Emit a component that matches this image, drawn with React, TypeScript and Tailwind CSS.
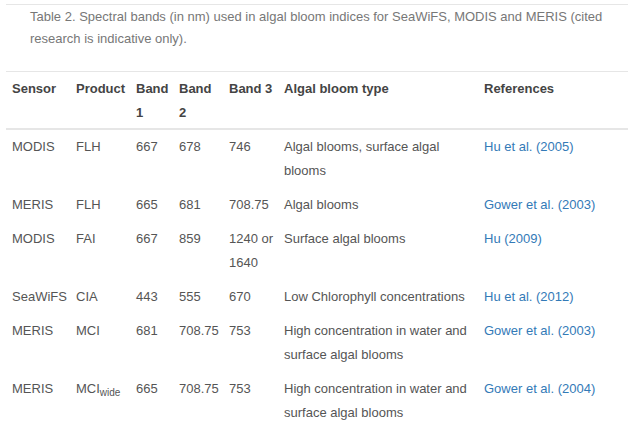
import React from "react";

type Row = {
  sensor: string;
  product: React.ReactNode;
  b1: string;
  b2: string;
  b3: string;
  type: string;
  ref: string;
};

const rows: Row[] = [
  { sensor: "MODIS", product: "FLH", b1: "667", b2: "678", b3: "746", type: "Algal blooms, surface algal blooms", ref: "Hu et al. (2005)" },
  { sensor: "MERIS", product: "FLH", b1: "665", b2: "681", b3: "708.75", type: "Algal blooms", ref: "Gower et al. (2003)" },
  { sensor: "MODIS", product: "FAI", b1: "667", b2: "859", b3: "1240 or 1640", type: "Surface algal blooms", ref: "Hu (2009)" },
  { sensor: "SeaWiFS", product: "CIA", b1: "443", b2: "555", b3: "670", type: "Low Chlorophyll concentrations", ref: "Hu et al. (2012)" },
  { sensor: "MERIS", product: "MCI", b1: "681", b2: "708.75", b3: "753", type: "High concentration in water and surface algal blooms", ref: "Gower et al. (2003)" },
  {
    sensor: "MERIS",
    product: (
      <>
        MCI<sub className="text-[10px]">wide</sub>
      </>
    ),
    b1: "665",
    b2: "708.75",
    b3: "753",
    type: "High concentration in water and surface algal blooms",
    ref: "Gower et al. (2004)",
  },
];

const headers = ["Sensor", "Product", "Band 1", "Band 2", "Band 3", "Algal bloom type", "References"];

export default function App() {
  return (
    <div className="w-[628px] h-[430px] overflow-hidden bg-white pt-[4px] font-['Liberation_Sans',Arial,sans-serif] text-[13px]">
      {/* Caption */}
      <div className="ml-[6px] border-t border-[#e6e6e6]">
        <p className="pl-[24px] pt-[1px] pr-[20px] leading-[22px] text-[#777]">
          Table 2. Spectral bands (in nm) used in algal bloom indices for SeaWiFS, MODIS and MERIS (cited
          research is indicative only).
        </p>
      </div>

      {/* Table */}
      <table className="ml-[6px] mt-[21px] w-[622px] table-fixed border-collapse leading-[24px]">
        <colgroup>
          <col className="w-[64px]" />
          <col className="w-[60px]" />
          <col className="w-[43px]" />
          <col className="w-[50px]" />
          <col className="w-[55px]" />
          <col className="w-[200px]" />
          <col />
        </colgroup>
        <thead>
          <tr className="border-t border-[#e6e6e6] border-b-2">
            {headers.map((h) => (
              <th
                key={h}
                className="pl-[6px] pr-[3px] pt-[5px] pb-[3px] text-left align-top font-bold text-[#444]"
              >
                {h}
              </th>
            ))}
          </tr>
        </thead>
        <tbody className="text-[#555]">
          {rows.map((r, i) => (
            <tr key={i}>
              <td className="pl-[6px] pr-[3px] py-[5px] align-top">{r.sensor}</td>
              <td className="pl-[6px] pr-[3px] py-[5px] align-top whitespace-nowrap">{r.product}</td>
              <td className="pl-[6px] pr-[3px] py-[5px] align-top">{r.b1}</td>
              <td className="pl-[6px] pr-[3px] py-[5px] align-top">{r.b2}</td>
              <td className="pl-[6px] pr-[3px] py-[5px] align-top">{r.b3}</td>
              <td className="pl-[6px] pr-[3px] py-[5px] align-top">{r.type}</td>
              <td className="pl-[6px] pr-[3px] py-[5px] align-top">
                <a className="text-[#337ab7]" href="#">
                  {r.ref}
                </a>
              </td>
            </tr>
          ))}
        </tbody>
      </table>
    </div>
  );
}
